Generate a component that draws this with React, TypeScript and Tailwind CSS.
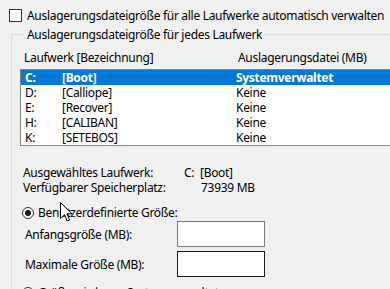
import React from 'react';

const drives = [
  { letter: 'C:', label: '[Boot]', file: 'Systemverwaltet', selected: true },
  { letter: 'D:', label: '[Calliope]', file: 'Keine' },
  { letter: 'E:', label: '[Recover]', file: 'Keine' },
  { letter: 'H:', label: '[CALIBAN]', file: 'Keine' },
  { letter: 'K:', label: '[SETEBOS]', file: 'Keine' },
];

const Radio = ({ checked }: { checked?: boolean }) => (
  <span className="w-[12px] h-[12px] rounded-full border border-[#333] bg-white flex items-center justify-center shrink-0">
    {checked && <span className="w-[6px] h-[6px] rounded-full bg-[#1a1a1a]" />}
  </span>
);

export default function App() {
  return (
    <div className="relative w-[390px] h-[289px] overflow-hidden whitespace-nowrap bg-[#f0f0f0] text-black text-[12px] leading-[15px] tracking-[-0.3px] font-['Noto_Sans',sans-serif]">
      {/* Top checkbox */}
      <div className="flex items-center pt-[8px] pl-[9px] gap-[5px]">
        <span className="w-[13px] h-[13px] border border-[#333] bg-white shrink-0" />
        <span>Auslagerungsdateigröße für alle Laufwerke automatisch verwalten</span>
      </div>

      {/* Group box */}
      <fieldset className="mt-[4px] ml-[11px] w-[420px] border border-[#dcdcdc] pl-[8px] pb-[20px]">
        <legend className="ml-[4px] px-[3px]">Auslagerungsdateigröße für jedes Laufwerk</legend>

        <div className="flex pl-[4px] mt-[8px] h-[15px]">
          <span className="w-[214px]">Laufwerk [Bezeichnung]</span>
          <span>Auslagerungsdatei (MB)</span>
        </div>

        <div className="mt-[4px] w-[420px] border border-[#828282] bg-white h-[77px]">
          {drives.map((d) => (
            <div
              key={d.letter}
              className={
                d.selected
                  ? 'flex h-[15px] pl-[4px] bg-[#0078d7] text-white font-bold'
                  : 'flex h-[15px] pl-[4px]'
              }
            >
              <span className="w-[37px]">{d.letter}</span>
              <span className="w-[174px]">{d.label}</span>
              <span>{d.file}</span>
            </div>
          ))}
        </div>

        {/* Info */}
        <div className="mt-[19px] pl-[3px] flex flex-col">
          <div className="flex h-[15px]">
            <span className="w-[161px]">Ausgewähltes Laufwerk:</span>
            <span className="w-[16px]">C:</span>
            <span>[Boot]</span>
          </div>
          <div className="flex h-[15px]">
            <span className="w-[178px]">Verfügbarer Speicherplatz:</span>
            <span>73939 MB</span>
          </div>
        </div>

        {/* Custom size */}
        <div className="mt-[10px] pl-[2px] flex items-center gap-[4px] h-[15px]">
          <Radio checked />
          <span>Benutzerdefinierte Größe:</span>
        </div>

        <div className="mt-[1px] pl-[5px] flex items-center h-[26px]">
          <span className="w-[152px]">Anfangsgröße (MB):</span>
          <span className="w-[88px] h-[26px] border border-[#7a7a7a] bg-white" />
        </div>
        <div className="mt-[4px] pl-[5px] flex items-center h-[26px]">
          <span className="w-[152px]">Maximale Größe (MB):</span>
          <span className="w-[88px] h-[26px] border border-[#1a1a1a] bg-white" />
        </div>

        <div className="mt-[8px] pl-[2px] flex items-center gap-[4px] h-[15px]">
          <Radio />
          <span>Größe wird vom System verwaltet</span>
        </div>
      </fieldset>

      {/* Mouse cursor */}
      <svg className="absolute left-[60px] top-[202px]" width="13" height="20" viewBox="0 0 13 20">
        <path d="M0.5 0.5 L0.5 16.5 L4.5 12.8 L7.2 19 L9.6 18 L7 11.8 L12 11.8 Z" fill="#fff" stroke="#000" strokeWidth="1" strokeLinejoin="miter" />
      </svg>
    </div>
  );
}
